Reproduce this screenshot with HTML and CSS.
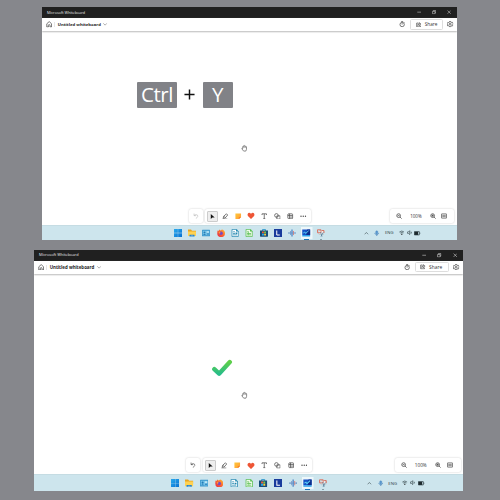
FILE: index.html
```
<!DOCTYPE html>
<html lang="en">
<head>
<meta charset="utf-8">
<title>Whiteboard</title>
<link rel="stylesheet" href="styles.css">
</head>
<body>
<svg class="sprite" aria-hidden="true">
  <defs>
    <linearGradient id="gCheck" x1="0" y1="0" x2="0" y2="1"><stop offset="0" stop-color="#5fcf49"/><stop offset="1" stop-color="#28bd89"/></linearGradient>
    <linearGradient id="gWin" x1="0" y1="0" x2="1" y2="1"><stop offset="0" stop-color="#29a9ed"/><stop offset="1" stop-color="#0871d1"/></linearGradient>
    <linearGradient id="gFox" x1="1" y1="0" x2="0" y2="1"><stop offset="0" stop-color="#ffc735"/><stop offset=".45" stop-color="#fb6a31"/><stop offset="1" stop-color="#e5264b"/></linearGradient>
    <linearGradient id="gNote" x1="0" y1="0" x2="1" y2="1"><stop offset="0" stop-color="#ffc83a"/><stop offset="1" stop-color="#ff9a35"/></linearGradient>
  </defs>
  <symbol id="home" viewBox="0 0 16 16"><path class="line" d="M2 7 8 1.500 14 7v8h-4v-4a2 2 0 0 0-4 0v4H2z"/></symbol>
  <symbol id="down" viewBox="0 0 16 16"><path class="line" d="m1 5 7 7 7-7"/></symbol>
  <symbol id="up" viewBox="0 0 16 16"><path class="line" stroke-width="2.500" d="m2 11 6-6 6 6"/></symbol>
  <symbol id="timer" viewBox="0 0 16 16"><circle class="line" cx="8" cy="9" r="5.500"/><path class="line" d="M5.500 1.500h5M8 5.500V9M12.500 3l1.500 1.500"/></symbol>
  <symbol id="share" viewBox="0 0 16 16"><path class="line" d="M7 3H2v11h11v-3M5 10c0-3 2-5 5-5V2l5 4.500-5 4V8c-2 0-4 .5-5 2z"/></symbol>
  <symbol id="gear" viewBox="0 0 16 16"><path class="line" d="m6.500 1h3l.5 2 2 1 2-.5 1.500 2.500-1.500 2 1.500 2-1.500 2.500-2-.5-2 1-.5 2h-3L6 13l-2-1-2 .5L.5 10 2 8 .5 6 2 3.500 4 4l2-1z"/><circle class="line" cx="8" cy="8" r="2.300"/></symbol>
  <symbol id="minimize" viewBox="0 0 16 16"><path class="line" d="M1 8h14"/></symbol>
  <symbol id="restore" viewBox="0 0 16 16"><path class="line" d="M2 5h9v9H2zM5 5V2h9v9h-3"/></symbol>
  <symbol id="close" viewBox="0 0 16 16"><path class="line" d="m2 2 12 12M14 2 2 14"/></symbol>
  <symbol id="undo" viewBox="0 0 16 16"><path class="line" d="M3 1v6h6M3 7c3-4 11-4 11 1.500 0 3-4 5-6 7"/></symbol>
  <symbol id="pointer" viewBox="0 0 16 16"><path fill="#111" d="M2.500 0v16l5-5H15z"/></symbol>
  <symbol id="pen" viewBox="0 0 16 16"><path class="line" d="m4 8 7-6 3 3-6 7-5 1zM5 8l3 3M1 15h12"/></symbol>
  <symbol id="note" viewBox="0 0 16 16"><path fill="url(#gNote)" d="M1 1h14v9l-5 5H1z"/><path fill="#f57b31" d="M9.500 15v-5H15z"/></symbol>
  <symbol id="heart" viewBox="0 0 16 16"><path fill="#ee5535" d="M8 15 1.500 8.500C-.5 6 1 1.500 4.500 1.500 6.500 1.500 8 4 8 4s1.500-2.500 3.500-2.500c3.500 0 5 4.500 3 7z"/></symbol>
  <symbol id="type" viewBox="0 0 16 16"><path class="line" d="M2.500 5V2h11v3M8 2v12M5.500 14h5"/></symbol>
  <symbol id="shapes" viewBox="0 0 16 16"><circle class="line" cx="6" cy="6" r="4.500"/><path class="line" d="M7 7h8v8H7z"/></symbol>
  <symbol id="template" viewBox="0 0 16 16"><rect class="line" x="2" y="2" width="12" height="12" rx="2"/><path class="line" d="M2 6h12M6 2v12M6 10h8"/></symbol>
  <symbol id="more" viewBox="0 0 16 16"><g fill="currentColor"><circle cx="2.500" cy="8" r="1.700"/><circle cx="8" cy="8" r="1.700"/><circle cx="13.500" cy="8" r="1.700"/></g></symbol>
  <symbol id="zoomout" viewBox="0 0 16 16"><circle class="line" cx="7" cy="7" r="5"/><path class="line" d="M4.500 7h5M10.500 10.500 15 15"/></symbol>
  <symbol id="zoomin" viewBox="0 0 16 16"><circle class="line" cx="7" cy="7" r="5"/><path class="line" d="M4 7h6M7 4v6M10.500 10.500 15 15"/></symbol>
  <symbol id="fit" viewBox="0 0 16 16"><rect class="line" x="1" y="2.500" width="14" height="11" rx="1"/><path class="line" d="M4 8h8M6 6 4 8l2 2M10 6l2 2-2 2"/></symbol>
  <symbol id="hand" viewBox="0 0 16 16"><path fill="#fff" stroke="#666" stroke-width="1.700" stroke-linejoin="round" d="M4 9V4.500q1-1.500 2 0V3q1-2 2.300 0v.5q1.200-1.500 2.200.5v1q1.500-1 2 .5v5.500L11 15H6l-4-5q-1-2 2-1z"/><path fill="none" stroke="#777" d="M6 4v4M8.300 3.500V8M10.500 4v4"/></symbol>
  <symbol id="check" viewBox="0 0 22 18"><path fill="none" stroke="url(#gCheck)" stroke-width="4.400" stroke-linecap="round" stroke-linejoin="round" d="m3.300 10.200 4.800 4.500L18.800 3"/></symbol>

  <symbol id="windows" viewBox="0 0 16 16"><path fill="url(#gWin)" d="M0 0h7.700v7.700H0zM8.300 0H16v7.700H8.300zM0 8.300h7.700V16H0zM8.300 8.300H16V16H8.300z"/></symbol>
  <symbol id="folder" viewBox="0 0 16 16"><path fill="#e9a522" d="M0 1h6l2 2.500h8V9H0z"/><path fill="#ffd252" d="M0 5h16v9H0z"/><path fill="#1a7fd0" d="M3 11.500h10V15H3z"/><path fill="#8fbfd8" d="M5.500 13h5v2h-5z"/></symbol>
  <symbol id="card" viewBox="0 0 16 16"><rect y="1.500" width="16" height="13" rx="1" fill="#3a97cd"/><path fill="#78c6ea" d="M1.500 3.500h13v9h-13z"/><circle cx="5" cy="7" r="2" fill="#247bb6"/><path fill="#247bb6" d="M2 12q3-4 6 0zM9.500 9h4.500v2H9.500z"/><path fill="#d9f1fa" d="M9.500 5H14v2H9.500z"/></symbol>
  <symbol id="firefox" viewBox="0 0 16 16"><path fill="url(#gFox)" d="M1 3l2 1 1.500-3L7 3l3-2c4 1 6 4 6 7.500A7.700 7.700 0 0 1 .5 8.500z"/><circle cx="8" cy="8.700" r="3.500" fill="#744ac6"/><path fill="#ff9c35" d="M3 6q3-1 4 1l-2 3z"/></symbol>
  <symbol id="writer" viewBox="0 0 16 16"><path fill="#fff" stroke="#2387b0" stroke-width="1.500" d="M2 .8h9L14.500 4v11.200H2z"/><path fill="#2387b0" d="M10 0v5h5zM4 5h4v1.500H4zM4 8h4v1.500H4zM4 11h8v1.500H4zM9 7h3.500v3H9z"/></symbol>
  <symbol id="calc" viewBox="0 0 16 16"><path fill="#effbe9" stroke="#56bd50" stroke-width="1.500" d="M2 .8h9L14.500 4v11.200H2z"/><path fill="#56bd50" d="M10 0v5h5zM4 5h4v1.500H4zM4 8h8v1.500H4zM4 11h8v1.500H4zM7 6h1v7H7z"/></symbol>
  <symbol id="store" viewBox="0 0 16 16"><path fill="none" stroke="#168bc8" stroke-width="1.500" d="M5 4V1h6v3"/><path fill="#174b78" d="M0 3h16v11q0 1.500-1 1.500H1q-1 0-1-1.500z"/><path fill="#ea5c3b" d="M4 5h3.700v3.700H4z"/><path fill="#79c846" d="M8.300 5H12v3.700H8.300z"/><path fill="#29a9e9" d="M4 9.300h3.700V13H4z"/><path fill="#ffc83a" d="M8.300 9.300H12V13H8.300z"/></symbol>
  <symbol id="lapp" viewBox="0 0 16 16"><path fill="#193b9c" d="M0 0h16v16H0z"/><path fill="none" stroke="#fff" stroke-width="2" d="M5.500 3v9h6"/></symbol>
  <symbol id="audio" viewBox="0 0 16 16"><path fill="none" stroke="#82a5cf" stroke-width="2" d="M2 6.500v3M5 4v8M14 6.500v3"/><path fill="none" stroke="#4d83c4" stroke-width="2.500" d="M8 1v14"/><path fill="none" stroke="#df8b83" stroke-width="2" d="M11 4v8"/><path stroke="#5386c2" d="M0 8h16"/></symbol>
  <symbol id="whiteboard" viewBox="0 0 16 16"><path fill="#1451c5" d="M0 1h16v11H0z"/><path fill="#0e2d8b" d="M10 1h6v11H8z"/><path fill="none" stroke="#59d0f5" stroke-width="2" d="m2 8 3-2 2 3 6-6"/><path fill="#2ca2eb" d="M0 12h16v3H0z"/></symbol>
  <symbol id="snip" viewBox="0 0 16 16"><path fill="#eef2f3" stroke="#a8b4bc" d="M4 3h9v8H4z"/><path fill="none" stroke="#de6752" stroke-width="1.700" d="M1 1.500h7v6H1zM10 3h4v5"/><path fill="none" stroke="#557e99" stroke-width="1.500" d="m7 6 3 9M12 7l-4 8"/></symbol>
  <symbol id="mic" viewBox="0 0 16 16"><rect x="5" y="1" width="6" height="9" rx="3" fill="#5f9dd3" stroke="#3475b5"/><path fill="none" stroke="#3475b5" stroke-width="1.800" d="M2.500 7c0 7 11 7 11 0M8 12v4"/></symbol>
  <symbol id="wifi" viewBox="0 0 16 16"><path class="line" d="M1 6q7-6 14 0M3.500 9q4.500-4 9 0M6 12q2-2 4 0"/><circle cx="8" cy="13" r="1.700" fill="#333"/></symbol>
  <symbol id="mute" viewBox="0 0 16 16"><path class="line" d="M1 6h3l4-4v12l-4-4H1zM10.500 6l4 4m0-4-4 4"/></symbol>
  <symbol id="battery" viewBox="0 0 16 16"><path fill="#1d292d" d="M1 4h9v8H1z"/><path class="line" d="M1 4h12v8H1zM15 6.500v3"/></symbol>
</svg>

<main class="page">
  <section class="window window-top">
    <div class="titlebar"><span class="app-name">Microsoft Whiteboard</span><div class="window-buttons"><svg><use href="#minimize"/></svg><svg><use href="#restore"/></svg><svg><use href="#close"/></svg></div></div>
    <header class="header"><svg class="home"><use href="#home"/></svg><span class="divider"></span><strong class="board-name">Untitled whiteboard</strong><svg class="chevron"><use href="#down"/></svg><div class="actions"><svg><use href="#timer"/></svg><button class="share"><svg><use href="#share"/></svg><span>Share</span></button><svg><use href="#gear"/></svg></div></header>
    <div class="canvas">
      <div class="shortcut"><kbd class="key key-ctrl">Ctrl</kbd><svg class="plus" viewBox="0 0 12 12"><path d="M6 .5v11M.5 6h11"/></svg><kbd class="key key-y">Y</kbd></div>
      <svg class="hand"><use href="#hand"/></svg>
      <div class="undo disabled"><svg><use href="#undo"/></svg></div>
      <div class="tools"><span class="tool selected"><svg><use href="#pointer"/></svg></span><span class="tool"><svg><use href="#pen"/></svg></span><span class="tool"><svg><use href="#note"/></svg></span><span class="tool heart"><svg><use href="#heart"/></svg></span><span class="tool"><svg><use href="#type"/></svg></span><span class="tool"><svg><use href="#shapes"/></svg></span><span class="tool"><svg><use href="#template"/></svg></span><span class="tool"><svg><use href="#more"/></svg></span></div>
      <div class="zoom"><svg><use href="#zoomout"/></svg><span>100%</span><svg><use href="#zoomin"/></svg><svg><use href="#fit"/></svg></div>
    </div>
    <footer class="taskbar"><div class="apps"><span><svg><use href="#windows"/></svg></span><span><svg><use href="#folder"/></svg></span><span><svg><use href="#card"/></svg></span><span><svg><use href="#firefox"/></svg></span><span><svg><use href="#writer"/></svg></span><span><svg><use href="#calc"/></svg></span><span><svg><use href="#store"/></svg></span><span><svg><use href="#lapp"/></svg></span><span><svg><use href="#audio"/></svg></span><span class="running"><svg><use href="#whiteboard"/></svg></span><span class="open"><svg><use href="#snip"/></svg></span></div><div class="tray"><svg><use href="#up"/></svg><svg class="mic"><use href="#mic"/></svg><span>ENG</span><svg><use href="#wifi"/></svg><svg><use href="#mute"/></svg><svg class="battery"><use href="#battery"/></svg></div></footer>
  </section>

  <section class="window window-bottom">
    <div class="titlebar"><span class="app-name">Microsoft Whiteboard</span><div class="window-buttons"><svg><use href="#minimize"/></svg><svg><use href="#restore"/></svg><svg><use href="#close"/></svg></div></div>
    <header class="header"><svg class="home"><use href="#home"/></svg><span class="divider"></span><strong class="board-name">Untitled whiteboard</strong><svg class="chevron"><use href="#down"/></svg><div class="actions"><svg><use href="#timer"/></svg><button class="share"><svg><use href="#share"/></svg><span>Share</span></button><svg><use href="#gear"/></svg></div></header>
    <div class="canvas">
      <svg class="check"><use href="#check"/></svg>
      <svg class="hand"><use href="#hand"/></svg>
      <div class="undo"><svg><use href="#undo"/></svg></div>
      <div class="tools"><span class="tool selected"><svg><use href="#pointer"/></svg></span><span class="tool"><svg><use href="#pen"/></svg></span><span class="tool"><svg><use href="#note"/></svg></span><span class="tool heart"><svg><use href="#heart"/></svg></span><span class="tool"><svg><use href="#type"/></svg></span><span class="tool"><svg><use href="#shapes"/></svg></span><span class="tool"><svg><use href="#template"/></svg></span><span class="tool"><svg><use href="#more"/></svg></span></div>
      <div class="zoom"><svg><use href="#zoomout"/></svg><span>100%</span><svg><use href="#zoomin"/></svg><svg><use href="#fit"/></svg></div>
    </div>
    <footer class="taskbar"><div class="apps"><span><svg><use href="#windows"/></svg></span><span><svg><use href="#folder"/></svg></span><span><svg><use href="#card"/></svg></span><span><svg><use href="#firefox"/></svg></span><span><svg><use href="#writer"/></svg></span><span><svg><use href="#calc"/></svg></span><span><svg><use href="#store"/></svg></span><span><svg><use href="#lapp"/></svg></span><span><svg><use href="#audio"/></svg></span><span class="running"><svg><use href="#whiteboard"/></svg></span><span class="open"><svg><use href="#snip"/></svg></span></div><div class="tray"><svg><use href="#up"/></svg><svg class="mic"><use href="#mic"/></svg><span>ENG</span><svg><use href="#wifi"/></svg><svg><use href="#mute"/></svg><svg class="battery"><use href="#battery"/></svg></div></footer>
  </section>
</main>
</body>
</html>
```
FILE: styles.css
```
* { box-sizing: border-box; }
body { margin: 0; background: #86878c; font-family: "Open Sans", "Noto Sans", sans-serif; color: #242424; }
.sprite { position: absolute; width: 0; height: 0; }
.line { fill: none; stroke: currentColor; stroke-width: 1.8; }
svg { display: block; flex: none; }

.page { width: 500px; height: 500px; padding-top: 7px; display: flex; flex-direction: column; align-items: flex-start; gap: 10px; overflow: hidden; }
.window { display: grid; grid-template-rows: 11px 13px 1fr 15px; background: #fff; overflow: hidden; }
.window-top { --pitch: 14.3px; --tool: 13px; width: 415px; height: 233px; margin-left: 42px; }
.window-bottom { --pitch: 14.8px; --tool: 13.38px; width: 429px; height: 241px; margin-left: 34px; grid-template-rows: 10.5px 13px 1fr 17px; }

.titlebar { display: flex; align-items: center; justify-content: space-between; background: #202020; color: #e8e8e8; padding: 0 5.8px 0 5px; }
.app-name { font-size: 3.75px; line-height: 6px; white-space: nowrap; }
.window-bottom .app-name { font-size: 3.9px; }
.window-buttons { display: flex; gap: 10.5px; }
.window-buttons svg { width: 4.3px; height: 4.3px; }
.window-bottom .window-buttons svg { width: 4.5px; height: 4.5px; }
.window-bottom .window-buttons { gap: 10.9px; }

.header { display: flex; align-items: center; padding: 0 3.4px 0 3.5px; position: relative; z-index: 1; background: #fff; box-shadow: 0 1px 1.5px #bbb; }
.home { width: 6.4px; height: 6.4px; color: #444; }
.divider { width: 1px; height: 5px; background: #e6e6e6; margin: 0 2.4px; }
.board-name { font-size: 4.25px; line-height: 7px; font-weight: 700; white-space: nowrap; width: 43.5px; }
.chevron { width: 4.2px; height: 4.2px; margin-left: 2.3px; color: #555; }
.actions { margin-left: auto; display: flex; align-items: center; color: #444; }
.actions > svg { width: 6.3px; height: 6.3px; }
.share { width: 32.5px; height: 10.5px; border: 1px solid #ddd; border-radius: 1.5px; background: #fff; margin: 0 4.7px; padding: 0 0 0 4.5px; display: flex; align-items: center; gap: 3.6px; font-family: inherit; font-size: 4.7px; line-height: 7px; color: #333; }
.share svg { width: 5.5px; height: 5.5px; }
.window-bottom .header { padding-right: 3.5px; }
.window-bottom .board-name { font-size: 4.4px; width: 45px; }
.window-bottom .share { width: 34px; font-size: 4.85px; }

.canvas { position: relative; }
.shortcut { position: absolute; left: 95px; top: 50px; height: 27px; display: flex; align-items: center; }
.key { display: flex; align-items: center; justify-content: center; height: 26px; background: #818287; border-radius: 1px; color: #fff; font: 400 20.5px/25px "Open Sans", sans-serif; padding-bottom: 1px; }
.key-ctrl { width: 40px; letter-spacing: -.5px; }
.key-y { width: 29.5px; }
.plus { width: 11px; height: 11px; margin: 0 8px 0 7px; }
.plus path { stroke: #111; stroke-width: 1.6; }
.hand { position: absolute; left: 199.2px; top: 112.7px; width: 7px; height: 8px; }
.check { position: absolute; left: 177px; top: 85px; width: 22px; height: 18px; }
.window-bottom .hand { left: 206.5px; top: 117.2px; width: 7.2px; }

.undo, .tools, .zoom { position: absolute; top: 178px; height: 14px; background: #fff; border-radius: 2px; box-shadow: 0 0 2px #c7c7c7; display: flex; align-items: center; }
.undo { left: 147px; width: 13.5px; justify-content: center; color: #444; }
.undo svg { width: 5.6px; height: 6px; }
.undo.disabled { color: #bbb; }
.tools { left: 163px; width: 106px; padding-left: .9px; }
.tool { width: var(--tool); height: 11px; display: flex; align-items: center; justify-content: center; color: #4a4a4a; }
.tool svg { width: 6.5px; height: 6.5px; }
.selected svg { width: 11px; height: 11px; padding: 2px; background: #eee; border: .5px solid #ccc; border-radius: 1px; }
.heart svg { width: 8px; height: 7.5px; }
.zoom { left: 348px; width: 64px; padding-left: 6px; color: #333; }
.zoom svg { width: 6px; height: 6px; }
.zoom span { width: 19.5px; margin: 0 4px 0 4.2px; font-size: 4.5px; line-height: 6px; text-align: center; }
.zoom svg:last-child { margin-left: 5.5px; }
.window-bottom :is(.undo, .tools, .zoom) { top: 184.9px; }
.window-bottom .undo { left: 152.4px; }
.window-bottom .tools { left: 169px; width: 109px; }
.window-bottom .zoom { left: 360.5px; width: 66px; }
.window-bottom .zoom span { margin: 0 4.5px; font-size: 4.7px; }
.window-bottom .zoom svg:last-child { margin-left: 6.2px; }

.taskbar { display: flex; align-items: center; background: #cde5ed; border-top: 1px solid #c5dce3; padding-left: 128.7px; position: relative; }
.apps { display: flex; }
.apps span { width: var(--pitch); height: 13px; display: flex; align-items: center; justify-content: center; position: relative; }
.apps svg { width: 8px; height: 8px; }
.apps .running { background: linear-gradient(#edf7fa, #edf7fa) center / 11.5px 12px no-repeat; }
.apps .running svg { width: 8.5px; }
.running::after, .open::after { content: ""; position: absolute; bottom: 0; left: calc(50% - 2.5px); width: 5px; height: 1px; background: #1b75ba; }
.open::after { width: 2px; left: calc(50% - 1px); background: #889fa9; }
.tray { display: flex; align-items: center; margin-left: 36px; color: #2b3b40; }
.tray svg { width: 4.8px; height: 4.8px; margin-right: 5.5px; }
.tray .mic { width: 5.5px; height: 6.5px; margin: 0 5.3px 0 0; }
.tray span { font-size: 4.2px; line-height: 6px; width: 9px; margin-right: 4.7px; }
.tray span + svg { width: 5.5px; height: 5.5px; margin-right: 2.3px; }
.tray svg:nth-of-type(4) { width: 5.3px; height: 5.3px; margin-right: 2.6px; }
.tray .battery { width: 6.5px; height: 6.5px; margin: 0; }
.window-bottom .taskbar { padding-left: 133.3px; }
.window-bottom .tray { margin-left: 37.2px; }
.window-bottom .tray span { width: 9.4px; font-size: 4.3px; }
.window-bottom .apps svg { width: 8.3px; height: 8.3px; }
.window-bottom .apps .running svg { width: 9px; }
```
